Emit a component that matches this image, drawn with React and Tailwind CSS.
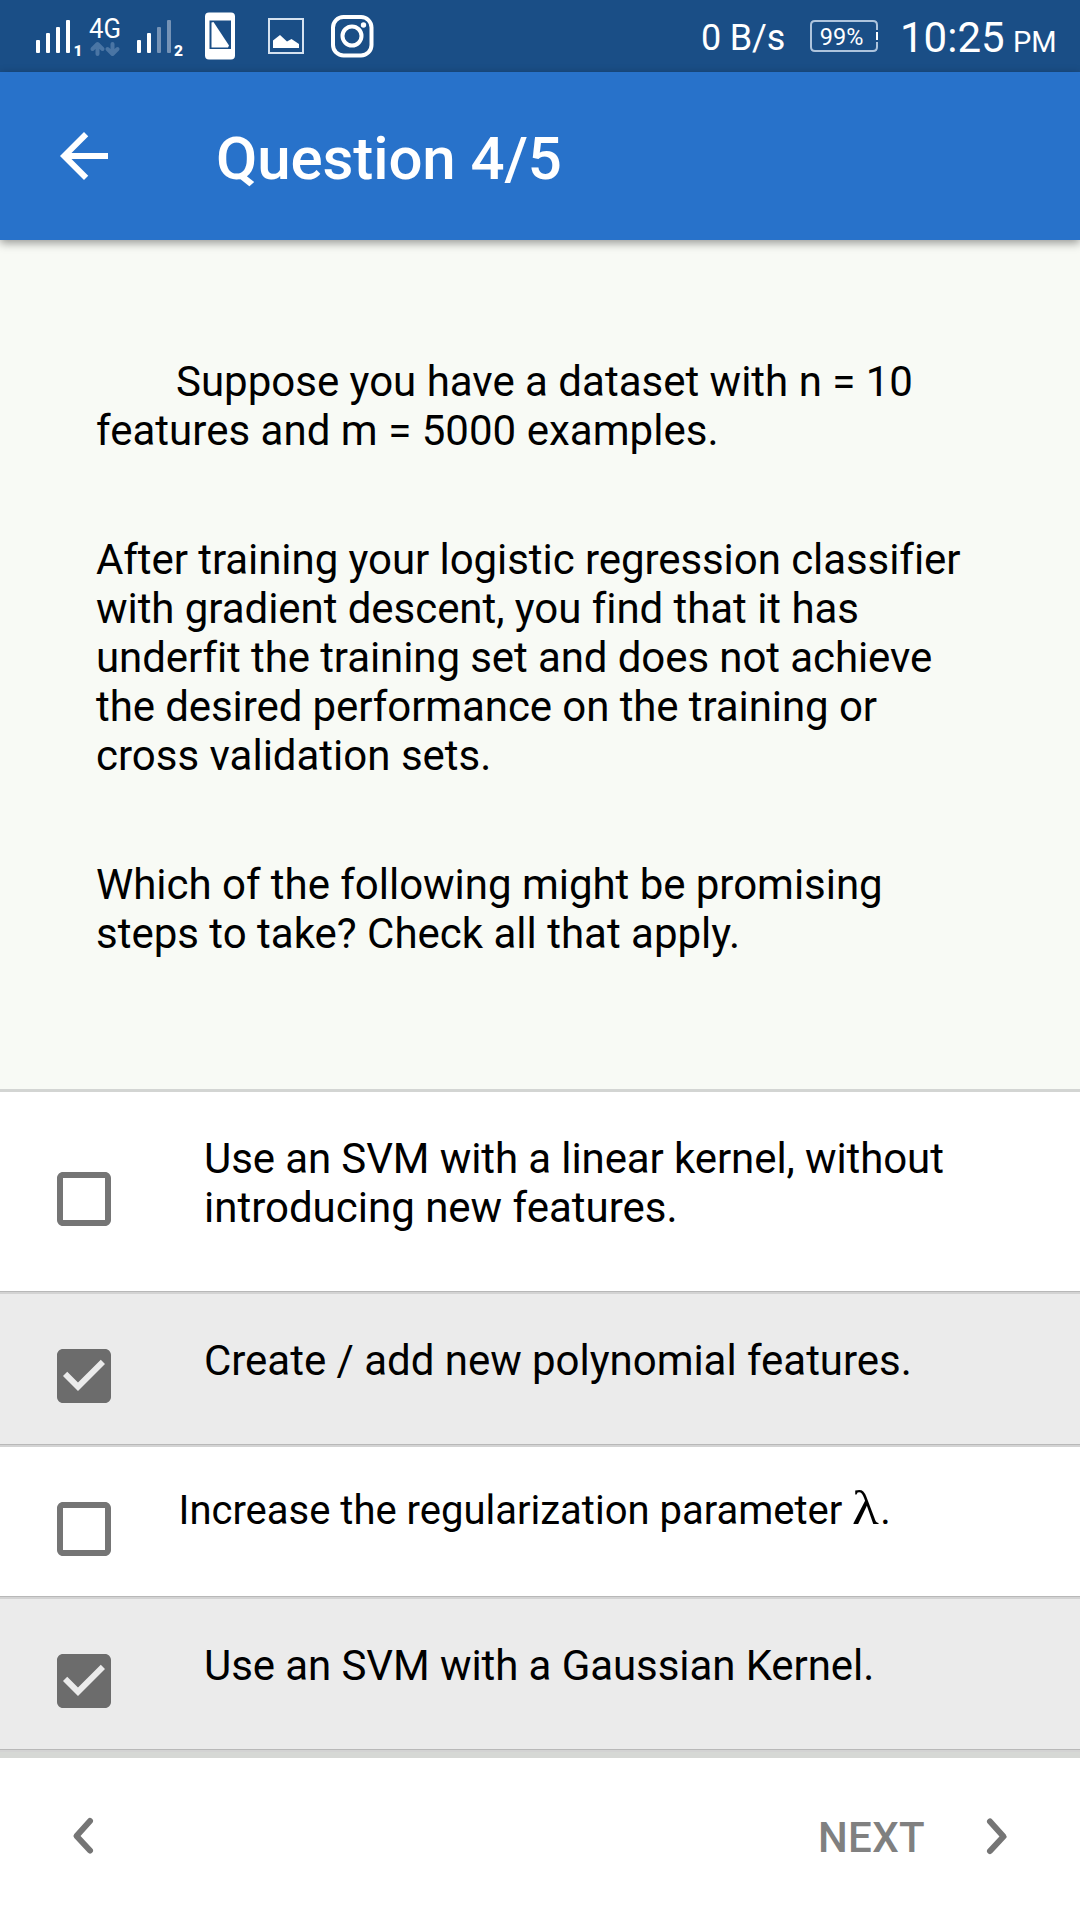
import React from "react";

function StatusBar() {
  return (
    <div className="relative z-10 flex h-[72px] items-start bg-[#1a4e86] text-white">
      <svg className="h-[72px] w-[390px] shrink-0" viewBox="0 0 390 72" fill="none">
        <g fill="#fff">
          <rect x="36" y="40" width="4" height="13" rx="1" />
          <rect x="46" y="33" width="4" height="20" rx="1" />
          <rect x="56" y="27" width="4" height="26" rx="1" />
          <rect x="66" y="20" width="4" height="33" rx="1" />
          <rect x="137" y="40" width="4" height="13" rx="1" />
          <rect x="147" y="33" width="4" height="20" rx="1" />
        </g>
        <g fill="#7593b6">
          <rect x="157" y="27" width="4" height="26" rx="1" />
          <rect x="167" y="20" width="4" height="33" rx="1" />
        </g>
        <text x="73.500" y="56" fill="#fff" fontFamily="Roboto" fontWeight="900" fontSize="15.5">1</text>
        <text x="174" y="56" fill="#fff" fontFamily="Roboto" fontWeight="900" fontSize="15.5">2</text>
        <text x="89" y="37.500" fill="#fff" fontFamily="Roboto" fontWeight="400" fontSize="27" textLength="32" lengthAdjust="spacingAndGlyphs">4G</text>
        <g stroke="#4a75a4" strokeWidth="4" strokeLinecap="round" strokeLinejoin="round">
          <path d="M97.500 54V44.500M92.500 49l5-5 5 5" />
          <path d="M112.500 44V53.500M107.500 49l5 5 5-5" />
        </g>
        <path fill="#fff" fillRule="evenodd" d="M209 12.500H231Q235 12.500 235 16.500V55.500Q235 59.500 231 59.500H209Q205 59.500 205 55.500V16.500Q205 12.500 209 12.500ZM209.500 20.500V49H231V20.500Z" />
        <path fill="#fff" d="M211.500 22.500L213.500 22L229 45.500L228 47.500H211.500Z" />
        <rect x="269" y="19" width="34" height="34" stroke="#d5e2f0" strokeWidth="2" />
        <path fill="#fff" d="M273 48V40.500L280 35L287 41.500L291.500 39L299 44V48Z" />
        <rect x="333" y="17" width="38.500" height="38.500" rx="10.500" stroke="#fff" strokeWidth="4" />
        <circle cx="352" cy="36" r="9.500" stroke="#fff" strokeWidth="4" />
        <circle cx="363.500" cy="25" r="2.700" fill="#fff" />
      </svg>
      <span className="ml-[311px] mt-[17px] w-[109px] shrink-0 whitespace-nowrap text-[36px] leading-[42px] tracking-[-0.2px]">0 B/s</span>
      <svg className="h-[72px] w-[70px] shrink-0" viewBox="0 0 70 72" fill="none">
        <path d="M67 30V25Q67 21 63 21H5Q1 21 1 25V47Q1 51 5 51H63Q67 51 67 47V42" stroke="#aec4dd" strokeWidth="2" />
        <path d="M67 32V40" stroke="#fff" strokeWidth="2" />
        <text x="9.800" y="45" fill="#fff" fontFamily="Roboto" fontSize="24" textLength="43.500" lengthAdjust="spacingAndGlyphs">99%</text>
      </svg>
      <span className="ml-5 mt-[13px] w-[113px] shrink-0 whitespace-nowrap text-[42px] leading-[49px]">10:25</span>
      <span className="mt-[25px] shrink-0 text-[29px] leading-[34px]">PM</span>
    </div>
  );
}

function AppBar() {
  return (
    <header className="relative z-10 flex h-[168px] items-center bg-[#2872ca] pl-12 text-white shadow-[0_3px_9px_rgba(0,0,0,0.4)]">
      <svg className="size-[72px]" viewBox="0 0 24 24" fill="currentColor">
        <path d="M20 11H7.830l5.590-5.590L12 4l-8 8 8 8 1.410-1.410L7.830 13H20v-2z" />
      </svg>
      <h1 className="ml-24 mt-[5px] text-[60px] font-medium leading-[70px] tracking-[-0.1px]">Question 4/5</h1>
    </header>
  );
}

function Checkbox({ checked }) {
  return (
    <svg className="ml-12 size-[72px] shrink-0" viewBox="0 0 24 24">
      {checked ? (
        <path fill="#6c6c6c" d="M19 3H5c-1.110 0-2 .9-2 2v14c0 1.100.89 2 2 2h14c1.110 0 2-.9 2-2V5c0-1.100-.89-2-2-2zm-9 14l-5-5 1.410-1.410L10 14.170l7.590-7.590L19 8l-9 9z" />
      ) : (
        <path fill="#757575" d="M19 5v14H5V5h14m0-2H5c-1.100 0-2 .9-2 2v14c0 1.100.9 2 2 2h14c1.100 0 2-.9 2-2V5c0-1.100-.9-2-2-2z" />
      )}
    </svg>
  );
}

function Option({ checked, className, textClass, children }) {
  return (
    <li className={"flex items-start border-b-2 border-[#d3d3d3] " + className}>
      <Checkbox checked={checked} />
      <p className={textClass}>{children}</p>
    </li>
  );
}

export default function App() {
  return (
    <div className="flex h-[1920px] w-[1080px] flex-col overflow-hidden bg-white font-['Roboto',sans-serif] text-black">
      <StatusBar />
      <AppBar />
      <section className="flex h-[852px] flex-col gap-20 border-b-[3px] border-[#d3d5d3] bg-[#f8faf5] pl-24 pt-[117px] text-[42px] leading-[49px]">
        <p className="indent-[80px]">Suppose you have a dataset with n = 10<br /><span className="tracking-[0.03px]">features and m = 5000 examples.</span></p>
        <p>
          <span className="tracking-[-0.065px]">After training your logistic regression classifier</span><br />
          <span className="tracking-[-0.05px]">with gradient descent, you find that it has</span><br />
          <span className="tracking-[-0.09px]">underfit the training set and does not achieve</span><br />
          <span className="tracking-[-0.085px]">the desired performance on the training or</span><br />
          cross validation sets.
        </p>
        <p><span className="tracking-[-0.03px]">Which of the following might be promising</span><br />steps to take? Check all that apply.</p>
      </section>
      <ul className="text-[42px] leading-[49px]">
        <Option className="h-[202px] bg-white pt-[71px] shadow-[inset_0_-1px_#b8b8b8]" textClass="-mt-[29px] ml-[84px]">
          <span className="tracking-[-0.1px]">Use an SVM with a linear kernel, without</span><br />introducing new features.
        </Option>
        <Option checked className="h-[153px] bg-[#ebebeb] pt-[46px] shadow-[inset_0_-1px_#b8b8b8]" textClass="-mt-[4px] ml-[84px] tracking-[-0.03px]">
          Create / add new polynomial features.
        </Option>
        <Option className="h-[152px] bg-white pt-[46px] shadow-[inset_0_-1px_#b8b8b8]" textClass="-mt-[10px] ml-[58.5px] whitespace-nowrap text-[40px]">
          Increase the regularization parameter <span className="inline-block w-[28px] origin-bottom-left scale-x-[1.13] font-['Liberation_Serif',serif] text-[49px] leading-none">λ</span>.
        </Option>
        <Option checked className="h-[153px] bg-[#ebebeb] pt-[46px] shadow-[inset_0_-1px_#b8b8b8]" textClass="-mt-[4px] ml-[84px] tracking-[-0.08px]">
          Use an SVM with a Gaussian Kernel.
        </Option>
      </ul>
      <div className="h-[6px] shrink-0 bg-[#d6d8d5]" />
      <footer className="flex flex-1 items-start bg-white pt-[54px] text-[#757575]">
        <svg className="ml-[66px] h-12 w-9" viewBox="0 0 36 48" fill="none" stroke="currentColor" strokeWidth="6" strokeLinecap="round" strokeLinejoin="round">
          <path d="M24 9L10.500 24L24 38.500" />
        </svg>
        <span className="ml-[716px] mt-[1px] w-[162px] text-[42px] font-medium leading-[49px] tracking-[0.3px] text-[#808080]">NEXT</span>
        <svg className="h-12 w-9" viewBox="0 0 36 48" fill="none" stroke="currentColor" strokeWidth="6" strokeLinecap="round" strokeLinejoin="round">
          <path d="M10 9.500L23.500 24.500L10 39" />
        </svg>
      </footer>
    </div>
  );
}
